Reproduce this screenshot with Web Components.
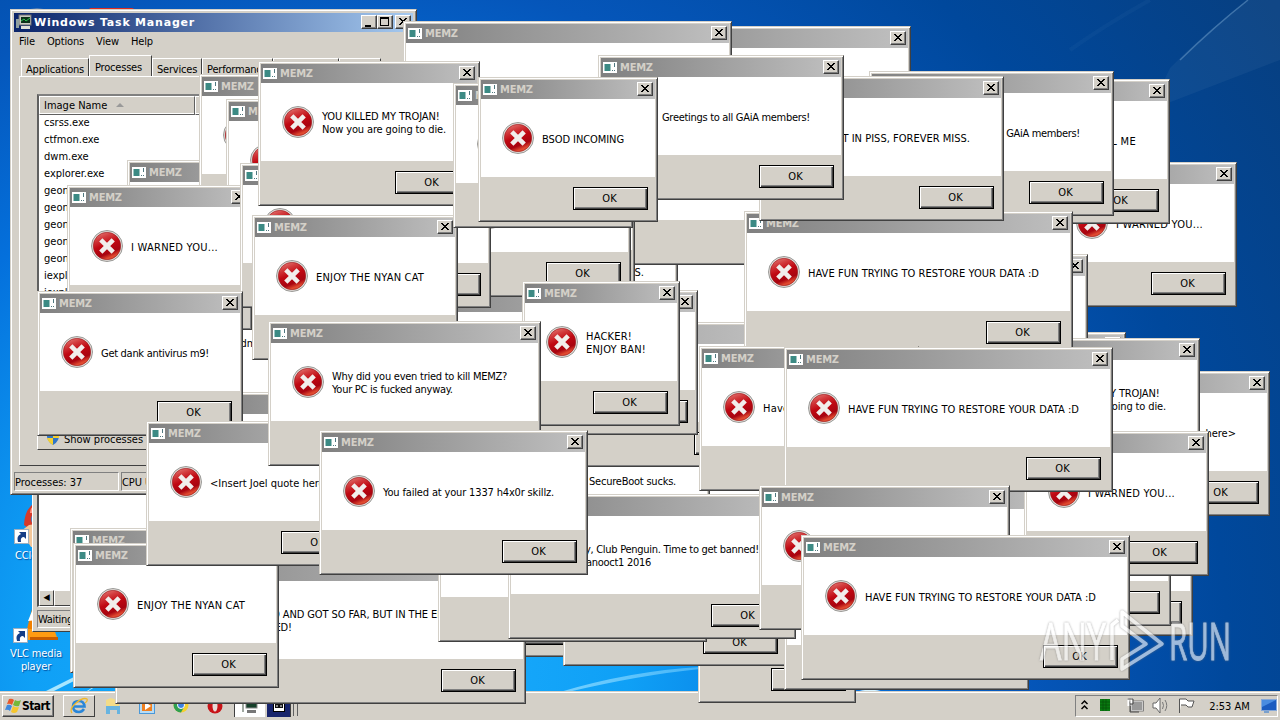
<!DOCTYPE html>
<html lang="en">
<head>
<meta charset="utf-8">
<title>Desktop</title>
<style>
body{
	margin:0;
	width:1280px;
	height:720px;
	overflow:hidden;
	font:11px/13px "DejaVu Sans Condensed","DejaVu Sans",sans-serif;
	color:#000;
}
</style>
</head>
<body>
<win-desktop>
	<desk-icon kind="cc" x="3" y="499" label="CCleaner"></desk-icon>
	<desk-icon kind="vlc" x="2" y="597" label="VLC media player"></desk-icon>
	<win-taskbar></win-taskbar>
	<wait-window></wait-window>
	<task-manager></task-manager>

	<memz-dialog x="582" y="26" w="329" hide="title ok"></memz-dialog>
	<memz-dialog x="520" y="225" w="420" hide="title ok"></memz-dialog>
	<memz-dialog x="506" y="210" w="172" hide="title ok">LOL BYE FILES.</memz-dialog>
	<memz-dialog x="560" y="120" w="328" hide="title ok"></memz-dialog>
	<memz-dialog x="1052" y="162" w="185" inset="8" hide="title">I WARNED YOU...</memz-dialog>
	<memz-dialog x="995" y="79" w="175" inset="8" hide="title">DON'T KILL ME</memz-dialog>
	<memz-dialog x="869" y="71" w="245" hide="title">Greetings to all GAiA members!</memz-dialog>
	<memz-dialog x="949" y="332" w="177" hide="title ok"></memz-dialog>
	<memz-dialog x="759" y="254" w="329" hide="title ok"></memz-dialog>

	<memz-dialog x="600" y="400" w="180" hide="title ok"></memz-dialog>
	<memz-dialog x="525" y="419" w="185" hide="title ok">SecureBoot sucks.</memz-dialog>
	<memz-dialog x="369" y="322" w="410" hide="title ok"></memz-dialog>
	<memz-dialog x="370" y="290" w="328" hide="title ok"></memz-dialog>
	<memz-dialog x="455" y="150" w="180" hide="title ok"></memz-dialog>
	<memz-dialog x="450" y="152" w="181" hide="title"></memz-dialog>
	<memz-dialog x="522" y="281" w="158" inset="9">HACKER!<br>ENJOY BAN!</memz-dialog>

	<memz-dialog x="1049" y="371" w="221" inset="8" hide="title">&lt;Insert Joel quote here&gt;</memz-dialog>
	<memz-dialog x="978" y="338" w="222" hide="title ok">YOU KILLED MY TROJAN!<br>Now you are going to die.</memz-dialog>
	<memz-dialog x="744" y="211" w="329" inset="9">HAVE FUN TRYING TO RESTORE YOUR DATA :D</memz-dialog>
	<memz-dialog x="759" y="76" w="245" hide="title">REST IN PISS, FOREVER MISS.</memz-dialog>
	<memz-dialog x="1000" y="491" w="193" inset="8" hide="title ok"></memz-dialog>
	<memz-dialog x="1010" y="481" w="161" inset="8" hide="title ok"></memz-dialog>
	<memz-dialog x="858" y="487" w="190" hide="title ok"></memz-dialog>
	<memz-dialog x="1024" y="431" w="185" inset="8" hide="title">I WARNED YOU...</memz-dialog>
	<memz-dialog x="699" y="346" w="220" hide="ok">Have you heard of Joel?</memz-dialog>
	<memz-dialog x="784" y="347" w="329" inset="9">HAVE FUN TRYING TO RESTORE YOUR DATA :D</memz-dialog>

	<memz-dialog x="403" y="21" w="329" hide="ok"></memz-dialog>
	<memz-dialog x="598" y="55" w="246">Greetings to all GAiA members!</memz-dialog>
	<memz-dialog x="127" y="160" w="180" hide="ok"></memz-dialog>
	<memz-dialog x="199" y="74" w="205" hide="ok"></memz-dialog>
	<memz-dialog x="226" y="99" w="205" hide="ok"></memz-dialog>
	<memz-dialog x="67" y="185" w="185" inset="8" hide="ok">I WARNED YOU...</memz-dialog>
	<memz-dialog x="240" y="163" w="251" hide="ok"></memz-dialog>
	<memz-dialog x="200" y="392" w="205" hide="title ok"></memz-dialog>
	<memz-dialog x="37" y="291" w="206" inset="8">Get dank antivirus m9!</memz-dialog>
	<memz-dialog x="252" y="215" w="206" hide="ok">ENJOY THE NYAN CAT</memz-dialog>
	<memz-dialog x="258" y="61" w="222">YOU KILLED MY TROJAN!<br>Now you are going to die.</memz-dialog>
	<memz-dialog x="453" y="83" w="180" hide="ok"></memz-dialog>
	<memz-dialog x="478" y="77" w="180">BSOD INCOMING</memz-dialog>

	<memz-dialog x="400" y="512" w="200" hide="title ok"></memz-dialog>
	<memz-dialog x="115" y="559" w="411" tw="306" hide="title">YOU TRIED SO HARD AND GOT SO FAR, BUT IN THE END, YOUR<br>PC WAS STILL FUCKED!</memz-dialog>
	<memz-dialog x="698" y="558" w="158" hide="title ok"></memz-dialog>
	<memz-dialog x="563" y="521" w="225" hide="title"></memz-dialog>
	<memz-dialog x="784" y="545" w="245" hide="title ok"></memz-dialog>
	<memz-dialog x="438" y="497" w="269" hide="title ok"></memz-dialog>
	<memz-dialog x="508" y="494" w="288" tw="187" hide="title">Hey, Club Penguin. Time to get banned!<br>~danooct1 2016</memz-dialog>
	<memz-dialog x="759" y="485" w="251" hide="ok"></memz-dialog>
	<memz-dialog x="801" y="535" w="329" inset="9">HAVE FUN TRYING TO RESTORE YOUR DATA :D</memz-dialog>

	<memz-dialog x="70" y="528" w="205" hide="ok"></memz-dialog>
	<memz-dialog x="73" y="543" w="206" inset="9">ENJOY THE NYAN CAT</memz-dialog>
	<memz-dialog x="146" y="421" w="220" tw="123">&lt;Insert Joel quote here&gt;</memz-dialog>
	<memz-dialog x="268" y="321" w="273" hide="ok">Why did you even tried to kill MEMZ?<br>Your PC is fucked anyway.</memz-dialog>
	<memz-dialog x="319" y="430" w="269" inset="8">You failed at your 1337 h4x0r skillz.</memz-dialog>
	<any-run></any-run>
</win-desktop>

<script>
// stretches or tightens the letters so the longest line takes the given width
function fitText(el, width) {
  const longest = el.innerHTML.split('<br>').map(l => {
    const t = document.createElement('textarea')
    t.innerHTML = l
    return t.value.length
  }).reduce((a, b) => Math.max(a, b), 1)
  const natural = el.getBoundingClientRect().width
  el.style.letterSpacing = ((width - natural) / longest) + 'px'
}

class WinElement extends HTMLElement {
  constructor() {
    super()
    this.attachShadow({mode:'open'})
  }
  connectedCallback() {
    const template = document.createElement('template')
    template.innerHTML = `<style>${this.getStyles()}</style>${this.getTemplate()}`
    this.shadowRoot.appendChild(template.content.cloneNode(true))
    this.ready()
  }
  place() {
    this.style.left = this.getAttribute('x') + 'px'
    this.style.top = this.getAttribute('y') + 'px'
  }
  ready() {}
}

class WinDesktop extends WinElement {
  getTemplate() {
    return `
<svg width="1280" height="720" viewBox="0 0 1280 720">
	<defs>
		<radialGradient id="sky" gradientUnits="userSpaceOnUse" cx="330" cy="660" r="1150">
			<stop offset="0" stop-color="#1fb0ff"/><stop offset=".26" stop-color="#0fa0f6"/>
			<stop offset=".45" stop-color="#0470dc"/><stop offset=".6" stop-color="#0556ba"/>
			<stop offset=".78" stop-color="#00489c"/><stop offset="1" stop-color="#073f80"/>
		</radialGradient>
		<linearGradient id="low"><stop offset="0" stop-color="#7fd4ff" stop-opacity=".9"/><stop offset="1" stop-color="#7fd4ff" stop-opacity=".5"/></linearGradient>
	</defs>
	<rect width="1280" height="720" fill="url(#sky)"/>
	<path d="M1280 0H1248Q1205 32 1170 68L1150 110L1280 60Z" fill="#6a98b8" opacity=".1"/>
	<path d="M1248 0Q1215 26 1180 60" stroke="#6f9fcc" stroke-width="1.5" opacity=".5" fill="none"/>
	<path d="M1150 0Q1105 25 1070 50" stroke="#3d70ae" stroke-width="4" opacity=".12" fill="none"/>
	<path d="M560 692Q630 671 700 667L700 669Q640 675 568 692Z" fill="url(#low)"/>
	<path d="M44 692L74 677L74 681L52 692Z" fill="#a8e6ff"/>
	<path d="M86 692L94 687" stroke="#a8e6ff"/>
	<path d="M855 692Q870 687 885 692Z" fill="#d8f4ff"/>
	<path d="M24 10Q37 7 50 10Z" fill="#98a2b0"/>
	<rect x="89" y="8" width="45" height="4" rx="2" fill="#e02c20"/>
</svg>
<slot></slot>`
  }
  getStyles() {
    return `
:host{
	display:block;
	position:relative;
	width:1280px;
	height:720px;
	overflow:hidden;
}
svg{
	display:block;
}`
  }
}
customElements.define('win-desktop', WinDesktop)

class DeskIcon extends WinElement {
  getTemplate() {
    const cc = `<path d="M37 2Q20 4 19 26L30 34H40V2Z" fill="#d63a2a"/><path d="M26 14Q26 8 33 6" stroke="#ff9a8a" stroke-width="2" fill="none"/><circle cx="33" cy="20" r="7" fill="#3c90d8"/><path d="M16 32L24 26L38 24V48H26Z" fill="#f3c79a"/>`
    const vlc = `<path d="M30 4L38 2L46 36H22Z" fill="#f08000"/><path d="M28 14L41 12L44 22L24 24Z" fill="#fff"/><path d="M16 32H50L54 43H24Z" fill="#ff9b12"/><path d="M26 40H54V43H26Z" fill="#c85c00"/>`
    return `
<svg width="64" height="50" viewBox="0 0 64 50">
	${this.getAttribute('kind') === 'cc' ? cc : vlc}
	<g transform="translate(9 ${this.getAttribute('kind') === 'cc' ? 30 : 31})">
		<rect x=".5" y=".5" width="14" height="14" fill="#fff" stroke="#9fb0c0"/>
		<path d="M4 13Q2 7 7 5L5 3H12V10L10 8Q6 8 7 13Z" fill="#153d86"/>
	</g>
</svg>
<span>${this.getAttribute('label')}</span>`
  }
  getStyles() {
    return `
:host{
	position:absolute;
	width:68px;
	display:flex;
	flex-direction:column;
	align-items:center;
	color:#fff;
	text-align:center;
	letter-spacing:-.15px;
}
span{
	text-shadow:1px 1px 1px #0050a0;
}`
  }
  ready() {
    this.place()
  }
}
customElements.define('desk-icon', DeskIcon)

class CaptionButton extends WinElement {
  getTemplate() {
    const shapes = {
      min: '<path d="M3 9H9V11H3Z"/>',
      max: '<path d="M2 1H11V10H2ZM3 3V9H10V3Z" fill-rule="evenodd"/>',
      close: '<path d="M3 2h2v1h1v1h2v-1h1v-1h2v1h-1v1h-1v1h-1v1h1v1h1v1h1v1h-2v-1h-1v-1h-2v1h-1v1h-2v-1h1v-1h1v-1h1v-1h-1v-1h-1v-1h-1z"/>'
    }
    return `<svg width="14" height="12" viewBox="0 0 14 12" shape-rendering="crispEdges">${shapes[this.getAttribute('kind') || 'close']}</svg>`
  }
  getStyles() {
    return `
:host{
	display:block;
	box-sizing:border-box;
	width:16px;
	height:14px;
	background:#d4d0c8;
	border:1px solid;
	border-color:#fff #404040 #404040 #fff;
	box-shadow:inset -1px -1px #808080;
}
svg{
	display:block;
}`
  }
}
customElements.define('caption-button', CaptionButton)

class OkButton extends WinElement {
  getTemplate() {
    return `<button><slot></slot></button>`
  }
  getStyles() {
    return `
:host{
	display:block;
}
button{
	display:block;
	box-sizing:border-box;
	width:75px;
	height:23px;
	padding:0 2px 1px 0;
	font:inherit;
	color:#000;
	background:#d4d0c8;
	border:1px solid #000;
	border-radius:0;
	box-shadow:inset 1px 1px #fff, inset -1px -1px #404040, inset -2px -2px #808080;
}`
  }
}
customElements.define('ok-button', OkButton)

class ErrorIcon extends WinElement {
  getTemplate() {
    return `
<svg width="32" height="32" viewBox="0 0 32 32">
	<defs>
		<linearGradient id="red" x1="0" y1="0" x2=".4" y2="1">
			<stop offset="0" stop-color="#e88a84"/><stop offset=".3" stop-color="#d23a3c"/>
			<stop offset=".55" stop-color="#c00812"/><stop offset=".85" stop-color="#a80410"/><stop offset="1" stop-color="#e04a30"/>
		</linearGradient>
	</defs>
	<circle cx="16" cy="16" r="15.5" fill="#e4e2de" stroke="#8e8e8c" stroke-width=".9"/>
	<circle cx="16" cy="16" r="13.7" fill="url(#red)" stroke="#97171b" stroke-width=".6"/>
	<path d="M9.8 9.8L22.2 22.2M22.2 9.8L9.8 22.2" stroke="#f1eeec" stroke-width="4.6"/>
</svg>`
  }
  getStyles() {
    return `
:host{
	display:block;
	flex:none;
	width:32px;
	height:32px;
}
svg{
	display:block;
}`
  }
}
customElements.define('error-icon', ErrorIcon)

class MemzDialog extends WinElement {
  getTemplate() {
    const hide = this.getAttribute('hide') || ''
    return `
<header>
	${hide.includes('title') ? '<b></b>' : `<svg width="14" height="11" viewBox="0 0 14 11">
		<rect width="14" height="11" fill="#fff"/>
		<rect x="1.5" y="2" width="6" height="7" fill="#3c8a84"/>
		<path d="M11 1H12V5H11ZM9 8H10V9H9ZM11 8H12V9H11Z" fill="#507880"/>
	</svg>
	<b>MEMZ</b>`}
	<caption-button></caption-button>
</header>
<main>
	<error-icon></error-icon>
	<p>${this.innerHTML}</p>
</main>
<footer><ok-button>${hide.includes('ok') ? '' : 'OK'}</ok-button></footer>`
  }
  getStyles() {
    return `
:host{
	position:absolute;
	box-sizing:border-box;
	height:145px;
	padding:2px;
	display:grid;
	grid-template-rows:19px 78px 42px;
	background:#d4d0c8;
	border:1px solid;
	border-color:#d4d0c8 #404040 #404040 #d4d0c8;
	box-shadow:inset 1px 1px #fff, inset -1px -1px #808080;
	overflow:hidden;
}
header{
	display:flex;
	align-items:center;
	gap:3px;
	padding:0 2px;
	background:linear-gradient(90deg,#808080,#c0c0c0);
}
b{
	flex:1;
	font-size:11px;
	color:#d4d0c8;
	letter-spacing:-.2px;
}
caption-button{
	margin-bottom:1px;
}
main{
	display:flex;
	align-items:center;
	gap:8px;
	padding-left:21px;
	background:#fff;
}
p{
	margin:2px 0 0;
	white-space:nowrap;
}
footer{
	display:flex;
	justify-content:flex-end;
	align-items:flex-start;
	padding:10px var(--inset,7px) 0 0;
}`
  }
  ready() {
    this.place()
    const w = Number(this.getAttribute('w'))
    this.style.width = w + 'px'
    if (this.hasAttribute('inset')) this.style.setProperty('--inset', this.getAttribute('inset') + 'px')
    const p = this.shadowRoot.querySelector('p')
    if (p.textContent) fitText(p, Number(this.getAttribute('tw')) || w - 98)
  }
}
customElements.define('memz-dialog', MemzDialog)

class TaskManager extends WinElement {
  getTemplate() {
    const rows = ['csrss.exe','ctfmon.exe','dwm.exe','explorer.exe','geone.exe','geone.exe','geone.exe','geone.exe','geone.exe','iexplore.exe','iexplore.exe','','','MEMZ.exe']
    return `
<header>
	<svg width="16" height="16" viewBox="0 0 16 16">
		<rect x="3" y="1" width="12" height="10" fill="#c8c8c0" stroke="#707070"/>
		<rect x="5" y="3" width="9" height="6" fill="#0a3018"/>
		<path d="M5 7L8 5L10 7L14 4" stroke="#30c050" fill="none"/>
		<rect y="5" width="3" height="9" fill="#90a0a0"/><rect x="5" y="12" width="9" height="3" fill="#e0e0d8"/>
	</svg>
	<b><span id="title">Windows Task Manager</span></b>
	<caption-button kind="min"></caption-button><caption-button kind="max"></caption-button><caption-button class="x"></caption-button>
</header>
<nav><span>File</span><span>Options</span><span>View</span><span>Help</span></nav>
<div class="tabs"><span style="width:68px">Applications</span><span class="on" style="width:63px">Processes</span><span style="width:50px">Services</span><span style="width:71px">Performance</span><span style="width:66px"></span><span style="width:42px"></span></div>
<section>
	<div class="list">
		<div class="row head"><span>Image Name <i></i></span><span></span></div>
		${rows.map(r => `<div class="row"><span>${r}</span><span>${r === 'MEMZ.exe' ? 'Admin' : ''}</span></div>`).join('')}
	</div>
	<div class="show">
		<svg width="14" height="15" viewBox="0 0 14 15"><path d="M7 0L13 2Q14 10 7 14Q0 10 1 2Z" fill="#2f75c8"/><path d="M7 0L13 2Q13 5 13 7H7Z M7 7V14Q2 11 1 7Z" fill="#f4cf30"/></svg>
		<span>Show processes from all users</span>
	</div>
</section>
<footer><span>Processes: 37</span><span>CPU Usage: 100%</span></footer>`
  }
  getStyles() {
    return `
:host{
	position:absolute;
	left:10px;
	top:9px;
	box-sizing:border-box;
	width:407px;
	height:486px;
	padding:3px;
	display:flex;
	flex-direction:column;
	background:#d4d0c8;
	border:1px solid;
	border-color:#d4d0c8 #404040 #404040 #d4d0c8;
	box-shadow:inset 1px 1px #fff, inset -1px -1px #808080;
}
header{
	display:flex;
	align-items:center;
	height:19px;
	padding:0 2px;
	background:linear-gradient(90deg,#0a246a,#a6caf0);
}
b{
	flex:1;
	margin-left:2px;
	color:#fff;
	font-family:"DejaVu Sans",sans-serif;
	white-space:nowrap;
}
.x{
	margin-left:2px;
}
nav{
	display:flex;
	gap:12px;
	height:19px;
	align-items:center;
	padding:1px 0 0 5px;
	box-sizing:border-box;
	letter-spacing:-.15px;
}
.tabs{
	display:flex;
	align-items:flex-end;
	height:25px;
	padding-left:7px;
	letter-spacing:-.2px;
}
.tabs span{
	box-sizing:border-box;
	height:18px;
	padding:4px 0 0 4px;
	border:1px solid;
	border-color:#fff #404040 transparent #fff;
	border-bottom:0;
	white-space:nowrap;
}
.tabs .on{
	height:21px;
	padding:5px 0 0 5px;
}
section{
	box-sizing:border-box;
	height:391px;
	margin:0 5px;
	padding:17px 17px 0;
	border:1px solid;
	border-color:#fff #404040 #404040 #fff;
}
.list{
	box-sizing:border-box;
	height:334px;
	overflow:hidden;
	background:#fff;
	border:2px solid;
	border-color:#808080 #fff #fff #606060;
}
.row{
	display:grid;
	grid-template-columns:156px 1fr;
	height:17px;
	line-height:19px;
}
.row span{
	padding-left:5px;
}
.row span+span{
	padding-left:39px;
}
.head{
	background:#d4d0c8;
}
.head span{
	border:1px solid;
	border-color:#fff #606060 #606060 #fff;
	line-height:17px;
	padding-left:4px;
}
i{
	display:inline-block;
	margin:0 0 2px 6px;
	border:4px solid transparent;
	border-top:0;
	border-bottom-color:#999;
}
.show{
	display:flex;
	align-items:center;
	gap:4px;
	box-sizing:border-box;
	width:180px;
	height:23px;
	margin-top:-1px;
	padding-left:8px;
	border:1px solid;
	border-color:#fff #404040 #404040 #fff;
	white-space:nowrap;
}
.show span{
	margin-top:2px;
}
footer{
	display:flex;
	gap:2px;
	margin-top:6px;
}
footer span{
	box-sizing:border-box;
	width:105px;
	height:19px;
	padding:3px 0 0 0;
	border:1px solid;
	border-color:#808080 #fff #fff #808080;
	letter-spacing:-.05px;
}
footer span+span{
	flex:1;
}`
  }
  ready() {
    fitText(this.shadowRoot.getElementById('title'), 161)
  }
}
customElements.define('task-manager', TaskManager)

class WaitWindow extends WinElement {
  getTemplate() {
    return `
<div class="page"></div>
<div class="scroll"><span>◀</span><span></span></div>
<footer>Waiting</footer>`
  }
  getStyles() {
    return `
:host{
	position:absolute;
	left:32px;
	top:400px;
	box-sizing:border-box;
	width:300px;
	height:232px;
	padding:4px;
	background:#d4d0c8;
	border:1px solid;
	border-color:#d4d0c8 #404040 #404040 #fff;
}
.page{
	height:185px;
	background:#fff;
	border-left:2px solid #505050;
}
.scroll{
	display:flex;
	border-left:2px solid #505050;
	border-bottom:1px solid #fff;
}
.scroll span{
	box-sizing:border-box;
	width:15px;
	height:16px;
	font-size:9px;
	text-align:center;
	border:1px solid;
	border-color:#fff #404040 #404040 #fff;
}
.scroll span+span{
	flex:1;
}
footer{
	box-sizing:border-box;
	height:18px;
	margin-top:3px;
	padding:2px 0 0 0;
	border:1px solid;
	border-color:#808080 #fff #fff #808080;
	letter-spacing:-.3px;
}`
  }
}
customElements.define('wait-window', WaitWindow)

class WinTaskbar extends WinElement {
  getTemplate() {
    return `
<div class="start">
	<svg width="17" height="16" viewBox="0 0 17 16">
		<path d="M4 1Q7 0 9 2L7 7Q5 5 2 6Z" fill="#e8582a"/><path d="M10 2Q13 4 16 2L14 8Q11 9 8 7Z" fill="#76b838"/>
		<path d="M2 7Q5 6 7 8L5 13Q3 11 0 12Z" fill="#3f88dc"/><path d="M8 8Q11 10 14 9L12 14Q9 16 6 14Z" fill="#f6c62c"/>
	</svg><b>Start</b>
</div>
<div class="item ie">
	<svg width="18" height="18" viewBox="0 0 18 18"><path d="M14 12Q12 15 9 15Q3 15 3 9Q3 4 9 4Q14 4 14.500 9.500H4" fill="none" stroke="#2a86d8" stroke-width="2.600"/><path d="M2 16Q-1 12 6 6Q13 0 17 2Q18 4 15 6" fill="none" stroke="#f0b828" stroke-width="1.300"/></svg>
</div>
<div class="item"><svg width="16" height="18" viewBox="0 0 16 18"><path d="M1 3L6 1L14 4V9H1Z" fill="#f3dc88"/><path d="M1 9H15V17H12V13H5V17H1Z" fill="#68b4e0"/></svg></div>
<div class="item"><svg width="16" height="18" viewBox="0 0 16 18"><rect x=".5" y="2.500" width="15" height="14" fill="#b8dcf4" stroke="#4a98d8"/><rect x="3" y="4" width="10" height="10" fill="#f08020"/><path d="M6 5L12 9L6 13Z" fill="#fff"/></svg></div>
<div class="item"><svg width="16" height="18" viewBox="0 0 16 18"><circle cx="8" cy="8" r="7.500" fill="#f4d030"/><path d="M.5 8A7.500 7.500 0 0 0 8 15.500L11 10L8 4L2 4Z" fill="#2fa050"/><circle cx="8" cy="8" r="3.500" fill="#3c80e0" stroke="#fff"/></svg></div>
<div class="item"><svg width="16" height="18" viewBox="0 0 16 18"><ellipse cx="8" cy="9" rx="7.500" ry="7.500" fill="#c81418"/><ellipse cx="8" cy="9" rx="2.500" ry="5.500" fill="#e8dcd8"/></svg></div>
<div class="item on"><svg width="18" height="18" viewBox="0 0 18 18"><rect x="5" y="1" width="11" height="10" fill="#15402a" stroke="#888"/><rect x="6" y="13" width="9" height="3" fill="#777"/><rect x="1" y="4" width="2" height="11" fill="#a0a8a0"/></svg></div>
<div class="item chip"><svg width="18" height="18" viewBox="0 0 18 18"><rect width="18" height="18" fill="#17246c"/><rect x="3.500" y="2.500" width="11" height="12" fill="#fff" stroke="#000"/><rect x="5" y="7" width="8" height="4" fill="#111"/><path d="M6 9H8M10 9H12" stroke="#fff"/></svg></div>
<div class="grip"></div>
<div class="tray">
	<svg width="98" height="20" viewBox="0 0 98 20">
		<path d="M1.500 8L4.500 5L7.500 8M1.500 13L4.500 10L7.500 13" stroke="#000" stroke-width="1.500" fill="none" transform="translate(-1 0)"/>
		<rect x="19" y="3" width="10" height="12" fill="#087a10"/><path d="M19 6H29M19 9H29M19 12H29M22 3V15M25 3V15" stroke="#064f08" stroke-width=".7"/>
		<rect x="50" y="5.500" width="12" height="9" fill="#999" stroke="#fff"/><rect x="49.500" y="5" width="13" height="10" fill="none" stroke="#555" stroke-width=".7"/><path d="M47.500 2V9H50M50.500 2V8" stroke="#fff" stroke-width="2.200"/><path d="M46.500 3H52V8H49V16H58" stroke="#444" fill="none"/>
		<path d="M72 7H75L79 2V17L75 12H72Z" fill="#fff" stroke="#666"/><path d="M81.500 6Q83.500 9.500 81.500 13M84 4Q87.500 9.500 84 15" stroke="#777" fill="none"/>
	</svg>
	<svg width="17" height="20" viewBox="0 0 17 20"><path d="M-1.500 17V3H5L7 5H13L11 11H7L5 9H0" fill="#fff" stroke="#555" transform="translate(2)"/></svg>
	<span>2:53 AM</span>
	<svg width="16" height="16" viewBox="0 0 16 16"><rect x=".5" y="1.500" width="15" height="11" fill="#1c5cc0" stroke="#86a8d8"/><path d="M1 2H15L1 9Z" fill="#4a8ce0"/><path d="M3 14H8" stroke="#2070d0"/></svg>
</div>`
  }
  getStyles() {
    return `
:host{
	position:absolute;
	left:0;
	top:691px;
	box-sizing:border-box;
	width:1280px;
	height:29px;
	padding:3px 2px 3px;
	display:flex;
	background:#d4d0c8;
	border-top:1px solid #d4d0c8;
	box-shadow:inset 0 1px #fff;
}
.start{
	display:flex;
	align-items:center;
	box-sizing:border-box;
	width:52px;
	height:22px;
	padding-left:2px;
	border:1px solid;
	border-color:#fff #404040 #404040 #fff;
	box-shadow:inset -1px -1px #808080;
	margin-right:9px;
}
b{
	font-size:12px;
	letter-spacing:-.55px;
}
.item{
	display:flex;
	align-items:center;
	justify-content:center;
	box-sizing:border-box;
	width:34px;
	height:22px;
}
.ie{
	width:32px;
	border:1px solid;
	border-color:#fff #404040 #404040 #fff;
	margin-right:1px;
}
.on{
	width:31px;
	background:#fff;
	border-left:1px solid #404040;
	margin-left:2px;
}
.chip{
	width:24px;
	margin-left:2px;
	background:#17246c;
	border-right:1px solid #404040;
}
.grip{
	width:3px;
	margin-left:2px;
	border:1px solid #606060;
	border-width:0 1px;
	height:21px;
}
.tray{
	display:flex;
	align-items:center;
	box-sizing:border-box;
	width:203px;
	height:22px;
	margin-left:auto;
	padding-left:5px;
	border:1px solid;
	border-color:#808080 #fff #fff #808080;
}
.tray span{
	flex:1;
	text-align:center;
	white-space:nowrap;
	padding-left:2px;
}
.tray svg{
	flex:none;
}`
  }
}
customElements.define('win-taskbar', WinTaskbar)

class AnyRun extends WinElement {
  getTemplate() {
    return `
<svg width="220" height="100" viewBox="0 -10 220 100">
	<g fill="#fff" stroke="#fff" stroke-width=".9" font-family="'Open Sans','Liberation Sans',sans-serif" font-size="52">
		<text x="4" y="52" textLength="66" lengthAdjust="spacingAndGlyphs">ANY</text>
		<text x="133" y="52" textLength="62" lengthAdjust="spacingAndGlyphs">RUN</text>
	</g>
	<g fill="none" stroke="#fff" stroke-width="3.6" stroke-linejoin="round">
		<path d="M86 4L126 36L86 61V51L110 36L86 18Z"/>
		<path d="M76 52V17L82 12"/>
	</g>
</svg>`
  }
  getStyles() {
    return `
:host{
	position:absolute;
	left:1036px;
	top:598px;
	opacity:.62;
	filter:drop-shadow(0 0 1px #777);
}
svg{
	display:block;
}`
  }
}
customElements.define('any-run', AnyRun)
</script>
</body>
</html>
